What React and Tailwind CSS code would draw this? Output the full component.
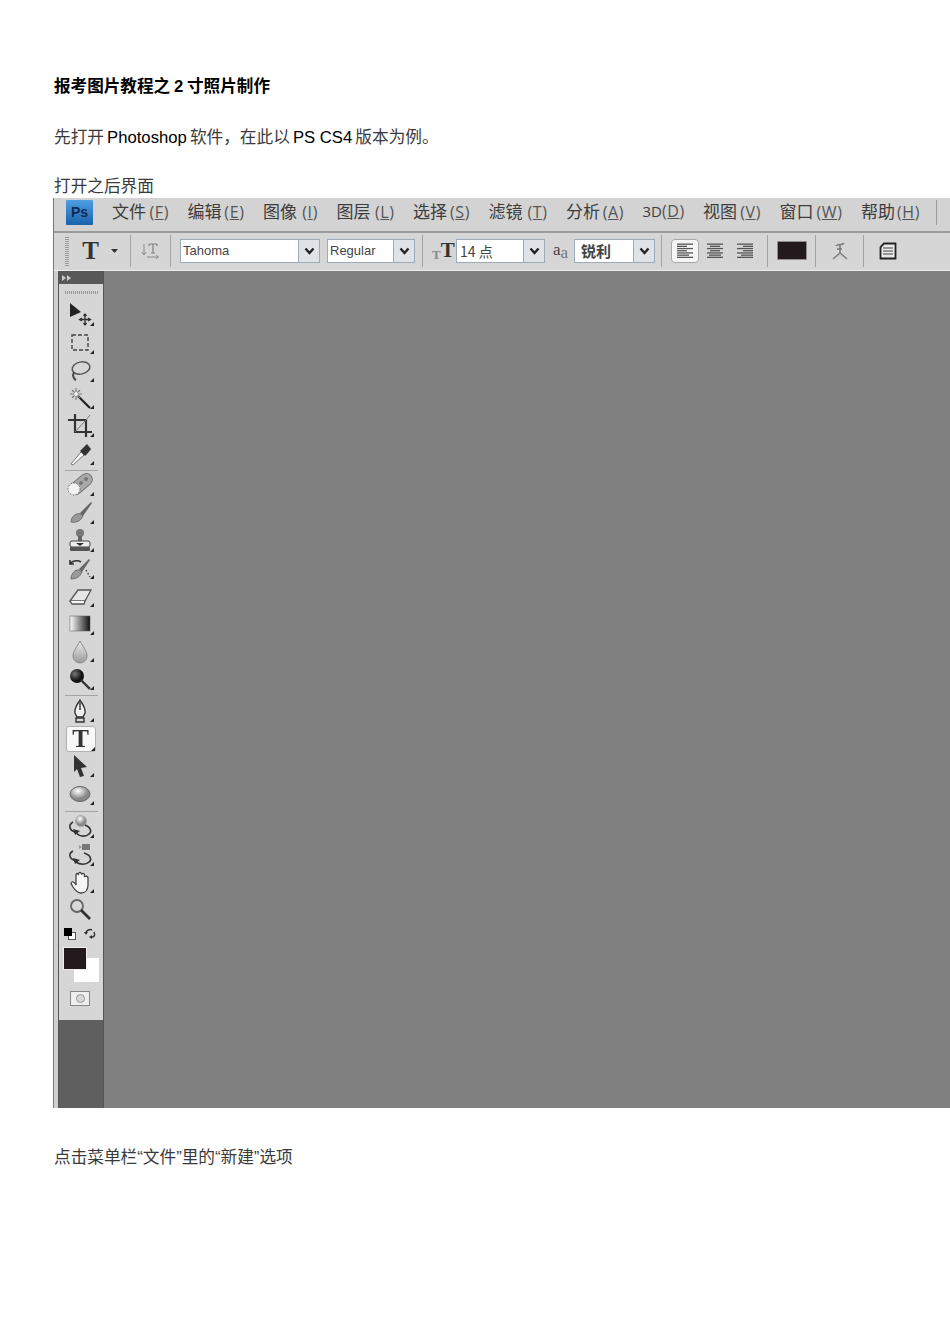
const pageFont = { fontFamily: '"Liberation Sans", "Noto Sans CJK SC", sans-serif' };

const menus = [
  ['文件', 'F', 57],
  ['编辑', 'E', 57],
  ['图像', 'I', 55],
  ['图层', 'L', 58],
  ['选择', 'S', 57],
  ['滤镜', 'T', 59],
  ['分析', 'A', 58],
  ['3D', 'D', 42],
  ['视图', 'V', 58],
  ['窗口', 'W', 63],
  ['帮助', 'H', 59],
];

function MenuBar() {
  return (
    <div className="flex h-[33px] items-center bg-[#d3d3d3] pl-[12px]">
      <div className="mb-[5px] flex h-[25px] w-[27px] items-center justify-center rounded-[1px] bg-gradient-to-b from-[#4f9fe0] to-[#1a62ad] text-[14px] font-bold text-[#0d2c55] [font-family:'Liberation_Sans',sans-serif]">
        Ps
      </div>
      <div className="ml-[19px] flex items-center gap-[18.5px] pb-[7px]">
        {menus.map(([label, key, width]) => (
          <span key={key} style={{ width }} className="flex items-baseline justify-between whitespace-nowrap text-[#3d3d3d]">
            <span className={label === '3D' ? 'text-[15px] font-["Open_Sans"]' : 'text-[17px] font-["Noto_Sans_CJK_SC"]'}>
              {label}
            </span>
            <span className="text-[16px] tracking-[0.6px] text-[#555] font-['Open_Sans']">
              (<span className="underline">{key}</span>)
            </span>
          </span>
        ))}
      </div>
      <div className="mb-[5px] ml-[16px] h-[25px] w-px bg-[#9a9a9a]" />
    </div>
  );
}

function Sep({ className = '' }) {
  return <div className={`h-[32px] w-px bg-[#a2a2a2] ${className}`} />;
}

function Select({ width, children, mono = false, className = '', textClass = '' }) {
  return (
    <div
      style={{ width }}
      className={`flex h-[24px] items-center border border-[#9daab8] bg-white text-[#444] ${className}`}
    >
      <span className={`flex-1 whitespace-nowrap ${mono ? "font-['Noto_Sans_CJK_SC']" : "pl-[2px] text-[13px] font-['Liberation_Sans']"} ${textClass}`}>{children}</span>
      <div className="flex h-full w-[21px] items-center justify-center border-l border-[#9daab8] bg-[#dfe3e8]">
        <svg width="11" height="8" viewBox="0 0 11 8">
          <path d="M1.5 1.5 L5.5 6 L9.5 1.5" fill="none" stroke="#222" strokeWidth="2.4" />
        </svg>
      </div>
    </div>
  );
}

function AlignIcon({ kind }) {
  const widths = [16, 10, 16, 10, 16, 12, 16];
  return (
    <svg width="18" height="18" viewBox="0 0 18 18">
      {widths.map((w, i) => {
        const x = kind === 'left' ? 1 : kind === 'center' ? 9 - w / 2 : 17 - w;
        return <rect key={i} x={x} y={1.5 + i * 2.2} width={w} height="1.3" fill="#555" />;
      })}
    </svg>
  );
}

function OptionsBar() {
  return (
    <div className="flex h-[40px] items-center border-t-2 border-b border-t-[#9b9b9b] border-b-[#ececec] bg-[#d6d6d6] pb-[2px] pl-[11px]">
      <div className="h-[30px] w-[4px] bg-[repeating-linear-gradient(0deg,#9a9a9a_0,#9a9a9a_1px,transparent_1px,transparent_2px)]" />
      <span className="ml-[13px] w-[17px] text-center text-[25px] font-bold leading-none text-[#333] font-['Liberation_Serif']">T</span>
      <svg className="ml-[12px]" width="7" height="4" viewBox="0 0 7 4">
        <path d="M0 0 H7 L3.5 4 Z" fill="#333" />
      </svg>
      <Sep className="ml-[12px]" />
      <svg className="ml-[10px]" width="19" height="20" viewBox="0 0 19 20">
        <path d="M3 3 V13 M1 11 L3 14 L5 11" fill="none" stroke="#8a8a8a" strokeWidth="1" />
        <path d="M8 3 H16 M12 3 V12 M10 12 H14 M8 3 V5 M16 3 V5" fill="none" stroke="#808080" strokeWidth="1.2" />
        <path d="M6 16 H17 M15 14 L17.5 16 L15 18" fill="none" stroke="#8a8a8a" strokeWidth="1" />
      </svg>
      <Sep className="ml-[10px]" />
      <Select width="140px" className="ml-[9px]">Tahoma</Select>
      <Select width="88px" className="ml-[7px]">Regular</Select>
      <Sep className="ml-[7px]" />
      <div className="ml-[9px] flex w-[22px] items-end font-['Liberation_Serif'] font-bold leading-none">
        <span className="text-[13px] text-[#8a8a8a]">T</span>
        <span className="text-[21px] text-[#333]">T</span>
      </div>
      <Select width="89px" mono className="ml-[2px]" textClass="pl-[3px] text-[14px]">14 点</Select>
      <div className="ml-[8px] flex w-[18px] items-baseline font-['Liberation_Serif'] leading-none">
        <span className="-translate-y-[1px] text-[17px] text-[#444]">a</span>
        <span className="translate-y-[2px] text-[17px] text-[#777]">a</span>
      </div>
      <Select width="81px" mono className="ml-[3px]" textClass="pl-[6px] text-[15px] font-bold">锐利</Select>
      <Sep className="ml-[6px]" />
      <div className="ml-[9px] flex h-[24px] w-[28px] items-center justify-center rounded-[4px] border border-[#a8a8a8] bg-[#f6f6f6]">
        <AlignIcon kind="left" />
      </div>
      <div className="ml-[7px]"><AlignIcon kind="center" /></div>
      <div className="ml-[12px]"><AlignIcon kind="right" /></div>
      <Sep className="ml-[13px]" />
      <div className="ml-[9px] h-[19px] w-[30px] border border-[#8d8d8d] bg-[#231a1e]" />
      <Sep className="ml-[8px]" />
      <svg className="ml-[14px]" width="20" height="22" viewBox="0 0 20 22">
        <path d="M6 6 C8 3 12 6 14 3 M10 5 V13 M7 9 H12 M10 13 L3 19 M10 13 L17 19" fill="none" stroke="#7a7a7a" strokeWidth="1.5" />
      </svg>
      <Sep className="ml-[13px]" />
      <svg className="ml-[15px]" width="18" height="18" viewBox="0 0 18 18">
        <path d="M5 1.5 H16.5 V16.5 H1.5 V5 Z" fill="#e8e8e8" stroke="#222" strokeWidth="1.8" />
        <path d="M4 6 H14 M4 9 H14 M4 12 H14" stroke="#444" strokeWidth="1.2" />
      </svg>
    </div>
  );
}

// tool glyphs, drawn on a 26x26 box
const toolIcons = {
  move: (
    <>
      <path d="M3 1 L14 10 L3 15 Z" fill="#222" />
      <path d="M18 12 V23 M12.5 17.5 H23.5 M16.5 14 L18 12 L19.5 14 M16.5 21 L18 23 L19.5 21 M15 16 L12.5 17.5 L15 19 M21 16 L23.5 17.5 L21 19" fill="none" stroke="#333" strokeWidth="1.3" />
    </>
  ),
  marquee: <rect x="5" y="5" width="16" height="15" fill="none" stroke="#444" strokeWidth="1.4" strokeDasharray="4 2" />,
  lasso: (
    <>
      <ellipse cx="14" cy="10" rx="9" ry="6" fill="none" stroke="#555" strokeWidth="1.5" transform="rotate(-12 14 10)" />
      <path d="M7 14 C5 18 7 21 9 22" fill="none" stroke="#444" strokeWidth="2" />
    </>
  ),
  wand: (
    <>
      <path d="M11 11 L23 23" stroke="#222" strokeWidth="2.2" />
      <path d="M9 3 V15 M3 9 H15 M5 5 L13 13 M13 5 L5 13" stroke="#777" strokeWidth="1.1" />
      <circle cx="9" cy="9" r="2" fill="#f4f4f4" />
    </>
  ),
  crop: (
    <>
      <path d="M8 1 V19 H25 M1 7 H19 V24" fill="none" stroke="#333" strokeWidth="2.2" />
      <path d="M8 19 L19 7 M19 7 L23 2" stroke="#777" strokeWidth="1" />
    </>
  ),
  dropper: (
    <>
      <path d="M4 23 L14 11 L17 14 L6 24 Z" fill="#f4f4f4" stroke="#777" strokeWidth="1" />
      <path d="M13 10 L18 15 L21 12 L24 8 L20 3 L16 7 Z" fill="#333" />
    </>
  ),
  heal: (
    <>
      <rect x="1" y="6" width="26" height="12" rx="6" fill="#a8a8a8" stroke="#777" transform="rotate(-40 14 12)" />
      <circle cx="7" cy="17" r="6" fill="#f2f2f2" stroke="#666" strokeDasharray="1.5 1.5" />
      <circle cx="14" cy="11" r="2" fill="#777" />
      <circle cx="19" cy="7" r="2" fill="#777" />
    </>
  ),
  brush: (
    <>
      <path d="M13 13 L24 2 L25 3 L16 16 Z" fill="#666" />
      <path d="M4 22 C4 17 9 12 14 14 L16 16 C14 21 9 23 4 22 Z" fill="#999" stroke="#555" strokeWidth="0.7" />
    </>
  ),
  stamp: (
    <>
      <circle cx="13" cy="5" r="4" fill="#777" />
      <rect x="11" y="8" width="4" height="6" fill="#666" />
      <rect x="3" y="13" width="20" height="6" rx="2" fill="#ededed" stroke="#444" />
      <path d="M9 15 H17 L13 18 Z" fill="#333" />
      <rect x="3" y="19" width="20" height="4" rx="1" fill="#555" />
    </>
  ),
  history: (
    <>
      <path d="M12 13 L22 3 L23 4 L15 16 Z" fill="#666" />
      <path d="M4 23 C4 18 8 13 12 14 L15 16 C13 21 9 23 4 23 Z" fill="#999" stroke="#555" strokeWidth="0.7" />
      <path d="M3 8 C6 4 11 4 14 6 M3 4 V8 H7" fill="none" stroke="#333" strokeWidth="1.6" />
      <path d="M19 14 L23 21" stroke="#444" strokeWidth="1.5" strokeDasharray="1.5 2" />
    </>
  ),
  eraser: (
    <>
      <path d="M3 18 L11 7 H24 L18 18 Z" fill="#e6e6e6" stroke="#555" strokeWidth="1.3" />
      <path d="M3 18 L5 21 H17 L18 18" fill="#f8f8f8" stroke="#555" strokeWidth="1.3" />
    </>
  ),
  gradient: <rect x="3" y="5" width="20" height="15" fill="url(#grad-bar)" stroke="#555" strokeWidth="0.5" />,
  drop: <path d="M13 2 C16 8 20 12 20 17 A7 7 0 0 1 6 17 C6 12 10 8 13 2 Z" fill="url(#grad-drop)" stroke="#888" strokeWidth="1" />,
  sponge: (
    <>
      <circle cx="10" cy="10" r="7" fill="url(#grad-ball)" />
      <path d="M14 14 L23 23" stroke="#333" strokeWidth="2.4" />
    </>
  ),
  pen: (
    <>
      <path d="M13 2 C16 7 19 10 18 15 L16 19 H10 L8 15 C7 10 10 7 13 2 Z" fill="#efefef" stroke="#333" strokeWidth="1.4" />
      <path d="M13 4 V12 M9 20 H17 V24 H9 Z" fill="none" stroke="#333" strokeWidth="1.4" />
    </>
  ),
  direct: <path d="M7 2 L20 14 L14 15 L17 23 L13 24 L10 16 L7 19 Z" fill="#333" />,
  ellipse: <ellipse cx="13" cy="13" rx="10" ry="7.5" fill="url(#grad-ball2)" stroke="#666" strokeWidth="1" />,
  rotate3d: (
    <>
      <circle cx="14" cy="7" r="5.5" fill="url(#grad-ball2)" stroke="#999" strokeWidth="0.6" />
      <path d="M6 8 C1 11 2 17 9 18 M18 11 C24 13 25 18 22 20 C19 23 13 23 9 19" fill="none" stroke="#333" strokeWidth="1.6" />
      <path d="M6 15 L13 17 L8 21 Z" fill="#333" />
    </>
  ),
  camera3d: (
    <>
      <rect x="15" y="2" width="8" height="6" fill="#777" />
      <path d="M12 3 L15 5 L12 7 Z" fill="#999" />
      <path d="M6 9 C1 12 2 17 9 19 M17 11 C24 13 25 18 22 20 C19 23 13 23 9 20" fill="none" stroke="#333" strokeWidth="1.6" />
      <path d="M6 16 L13 18 L8 22 Z" fill="#333" />
    </>
  ),
  hand: (
    <path d="M5 12 C7 11 9 15 9 15 V5 C9 3 11 3 11.5 5 V3.5 C12 2 14 2 14.5 4 V4.5 C15 3 17.5 3 17.5 5 V7 C18 5.5 21 6 21 8 V15 C21 20 18 23 14 23 C10 23 8 20 6 17 C5 15 3 13 5 12 Z" fill="#f5f5f5" stroke="#444" strokeWidth="1.3" />
  ),
  zoom: (
    <>
      <circle cx="10" cy="9" r="6" fill="#d8d8d8" stroke="#666" strokeWidth="1.8" />
      <path d="M14 13 L23 22" stroke="#333" strokeWidth="2.8" />
    </>
  ),
};

function Tool({ name, corner = true }) {
  return (
    <div className="relative flex h-[27.7px] w-full items-center justify-center pr-[2px]">
      <svg width="26" height="26" viewBox="0 0 26 26">
        {toolIcons[name]}
      </svg>
      {corner && <span className="absolute bottom-[3px] right-[9px] h-0 w-0 border-b-[4px] border-l-[4px] border-b-[#222] border-l-transparent" />}
    </div>
  );
}

function ToolSep({ className = '' }) {
  return <div className={`mx-auto h-px w-[33px] bg-[#a4a4a4] ${className}`} />;
}

function ToolBar() {
  return (
    <div className="flex w-[46px] shrink-0 flex-col border-l border-r border-l-[#555] border-r-[#555] bg-[#5f5f5f]">
      <div className="bg-[#d6d6d6] pb-[14px]">
        <div className="flex h-[13px] items-center gap-[1px] bg-[#585858] pl-[3px]">
          <span className="h-0 w-0 border-y-[3px] border-l-[4px] border-y-transparent border-l-[#ccc]" />
          <span className="h-0 w-0 border-y-[3px] border-l-[4px] border-y-transparent border-l-[#ccc]" />
        </div>
        <div className="mx-auto mt-[7px] h-[3px] w-[33px] bg-[repeating-linear-gradient(90deg,#9a9a9a_0,#9a9a9a_1px,transparent_1px,transparent_2px)]" />
        <div className="mt-[7.5px]" />
        {['move', 'marquee', 'lasso', 'wand', 'crop', 'dropper'].map((t) => <Tool key={t} name={t} />)}
        <ToolSep className="mb-[1px] mt-[2px]" />
        <div className="mt-[1px]" />
        {['heal', 'brush', 'stamp', 'history', 'eraser', 'gradient', 'drop', 'sponge'].map((t) => <Tool key={t} name={t} />)}
        <ToolSep className="my-[1.5px]" />
        <Tool name="pen" />
        <div className="relative flex h-[27.7px] w-full items-center justify-center pr-[1px]">
          <div className="flex h-[26px] w-[30px] items-center justify-center rounded-[3px] border border-[#b0b0b0] bg-[#f8f8f8] text-[25px] font-bold leading-none text-[#333] font-['Liberation_Serif']">
            T
          </div>
          <span className="absolute bottom-[2px] right-[8px] h-0 w-0 border-b-[4px] border-l-[4px] border-b-[#222] border-l-transparent" />
        </div>
        <Tool name="direct" />
        <Tool name="ellipse" />
        <ToolSep className="mb-[1.5px] mt-[3px]" />
        <Tool name="rotate3d" />
        <Tool name="camera3d" />
        <Tool name="hand" />
        <Tool name="zoom" corner={false} />
        <div className="mt-[4px] flex items-center justify-between pl-[5px] pr-[6px]">
          <div className="relative h-[12px] w-[12px]">
            <span className="absolute bottom-0 right-0 h-[8px] w-[8px] border border-[#555] bg-white" />
            <span className="absolute left-0 top-0 h-[8px] w-[8px] bg-black" />
          </div>
          <svg width="14" height="12" viewBox="0 0 14 12">
            <path d="M3 5 C3 2 7 1 9 2 M9 9 C12 9 12 6 11 4" fill="none" stroke="#333" strokeWidth="1.5" />
            <path d="M1 4 H5 L3 7 Z M9 7 V11 L6 9 Z" fill="#333" />
          </svg>
        </div>
        <div className="relative ml-[4px] mt-[7px] h-[35px] w-[36px]">
          <div className="absolute bottom-0 right-0 h-[24px] w-[25px] bg-white" />
          <div className="absolute left-0 top-0 h-[23px] w-[24px] border border-[#eee] bg-[#231a1e]" />
        </div>
        <div className="ml-[11px] mt-[9px] flex h-[15px] w-[20px] items-center justify-center border border-[#888] bg-[#eee]">
          <span className="h-[9px] w-[9px] rounded-full border border-[#999] bg-[#d8d8d8]" />
        </div>
      </div>
    </div>
  );
}

function Screenshot() {
  return (
    <div className="flex h-[910px] flex-col border-l border-[#777] blur-[0.35px]">
      <MenuBar />
      <OptionsBar />
      <div className="flex min-h-0 flex-1">
        <div className="w-[4px] shrink-0 bg-[#d0d0d0]" />
        <ToolBar />
        <div className="flex-1 bg-[#808080]" />
      </div>
    </div>
  );
}

export default function App() {
  return (
    <div style={pageFont} className="relative min-h-[1344px] w-[950px] overflow-hidden bg-white text-[16.67px] leading-[20px] text-[#3a3a3a]">
      <svg className="absolute h-0 w-0">
        <defs>
          <linearGradient id="grad-bar"><stop offset="0" stopColor="#fff" /><stop offset="1" stopColor="#111" /></linearGradient>
          <linearGradient id="grad-drop" x1="0" y1="0" x2="0" y2="1"><stop offset="0" stopColor="#eee" /><stop offset="1" stopColor="#999" /></linearGradient>
          <radialGradient id="grad-ball" cx="0.35" cy="0.35"><stop offset="0" stopColor="#777" /><stop offset="1" stopColor="#111" /></radialGradient>
          <radialGradient id="grad-ball2" cx="0.4" cy="0.3"><stop offset="0" stopColor="#fff" /><stop offset="1" stopColor="#888" /></radialGradient>
        </defs>
      </svg>
      <div className="pt-[77px]">
        <h1 className="pl-[54px] text-[16.6px] font-bold text-black [word-spacing:-0.8px]">报考图片教程之 2 寸照片制作</h1>
        <p className="mt-[31px] pl-[54px] [word-spacing:-1.5px]">
          先打开 <span className="text-black">Photoshop</span> 软件，在此以 <span className="text-black [word-spacing:0]">PS CS4</span> 版本为例。
        </p>
        <p className="mt-[29px] pl-[54px]">打开之后界面</p>
        <div className="ml-[53px] mt-[1px]">
          <Screenshot />
        </div>
        <p className="mt-[40px] pl-[54px]">点击菜单栏“文件”里的“新建”选项</p>
      </div>
    </div>
  );
}
